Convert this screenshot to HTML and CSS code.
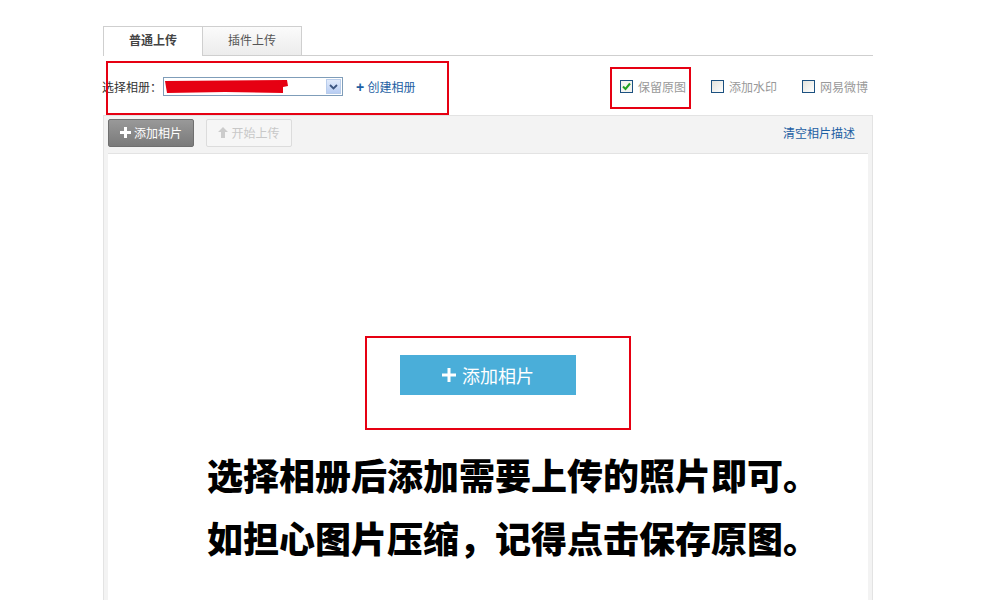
FILE: index.html
```html
<!DOCTYPE html>
<html>
<head>
    <title>上传相片</title>
    <link rel="stylesheet" href="styles.css">
</head>
<body>
    <div id="upload">
        <div class="tabs">
            <div class="tab active">普通上传</div>
            <div class="tab">插件上传</div>
        </div>

        <div class="options">
            <div class="album-row">
                <span class="album-label">选择相册：</span>
                <div class="album-select">
                    <svg class="scribble" width="124" height="14" viewBox="0 0 124 14">
                        <polygon points="0,1 122,0 123,6 118,7 118,13 60,12 2,13" fill="#e60012"/>
                    </svg>
                    <span class="select-arrow">
                        <svg width="9" height="6" viewBox="0 0 9 6"><path d="M1 1 L4.5 4.5 L8 1" fill="none" stroke="#3d5680" stroke-width="1.8"/></svg>
                    </span>
                </div>
                <a class="create-link"><b>+</b> 创建相册</a>
                <div class="mark mark-album"></div>
            </div>
            <div class="checks">
                <label class="check keep">
                    <span class="box checked">
                        <svg width="11" height="11" viewBox="0 0 11 11"><path d="M2 5.5 L4.5 8 L9 2.5" fill="none" stroke="#21a121" stroke-width="2"/></svg>
                    </span>保留原图
                    <div class="mark mark-keep"></div>
                </label>
                <label class="check"><span class="box"></span>添加水印</label>
                <label class="check"><span class="box"></span>网易微博</label>
            </div>
        </div>

        <div class="panel">
            <div class="toolbar">
                <button class="btn btn-add">
                    <svg width="11" height="11" viewBox="0 0 11 11"><path d="M4 0h3v4h4v3H7v4H4V7H0V4h4z" fill="#fff"/></svg>添加相片
                </button>
                <button class="btn btn-start">
                    <svg width="10" height="11" viewBox="0 0 10 11"><path d="M5 0 L10 5 H7 V11 H3 V5 H0 Z" fill="#ccc"/></svg>开始上传
                </button>
                <a class="clear-link">清空相片描述</a>
            </div>
            <div class="drop">
                <div class="big-add-wrap">
                    <button class="big-add">
                        <svg width="14" height="14" viewBox="0 0 14 14"><path d="M5.5 0h3v5.5H14v3H8.5V14h-3V8.5H0v-3h5.5z" fill="#fff"/></svg>添加相片
                    </button>
                    <div class="mark mark-big"></div>
                </div>
                <div class="tip">
                    <p>选择相册后添加需要上传的照片即可。</p>
                    <p>如担心图片压缩，记得点击保存原图。</p>
                </div>
            </div>
        </div>
    </div>
</body>
</html>
```

FILE: styles.css
```css
body {
    margin: 0;
    background: #fff;
    font-family: "Liberation Sans", "Noto Sans CJK SC", sans-serif;
    font-size: 12px;
    color: #333;
    overflow: hidden;
}
#upload {
    width: 770px;
    margin-left: 103px;
    padding-top: 26px;
}
.tabs {
    display: flex;
    height: 29px;
    border-bottom: 1px solid #cfcfcf;
}
.tab {
    width: 98px;
    height: 28px;
    line-height: 28px;
    text-align: center;
    border: 1px solid #cfcfcf;
    border-bottom: none;
    background: linear-gradient(#fbfbfb, #ececec);
    color: #555;
}
.tab + .tab { border-left: none; }
.tab.active {
    height: 29px;
    background: #fff;
    font-weight: bold;
    color: #444;
}
.options {
    height: 59px;
    display: flex;
    align-items: center;
    justify-content: space-between;
}
.album-row {
    position: relative;
    display: flex;
    align-items: center;
    margin-left: -1px;
    margin-top: 2px;
}
.album-label {
    color: #333;
    margin-right: 1px;
}
.album-select {
    position: relative;
    width: 178px;
    height: 17px;
    border: 1px solid #7f9db9;
    background: #fff;
}
.scribble {
    position: absolute;
    left: 1px;
    top: 2px;
}
.select-arrow {
    position: absolute;
    right: 1px;
    top: 1px;
    width: 15px;
    height: 15px;
    border: 1px solid #b9cdeb;
    box-sizing: border-box;
    background: linear-gradient(#e2ebfb, #b8cdf3);
    display: flex;
    align-items: center;
    justify-content: center;
}
.create-link {
    margin-left: 13px;
    color: #1d5fa3;
}
.create-link b { font-size: 14px; }
.mark {
    position: absolute;
    border: 2px solid #e60012;
    pointer-events: none;
}
.mark-album {
    left: 4px;
    top: -16px;
    width: 339px;
    height: 50px;
}
.checks {
    display: flex;
    align-items: center;
    margin-right: 5px;
    margin-top: 2px;
}
.check {
    position: relative;
    display: flex;
    align-items: center;
    color: #999;
    margin-left: 25px;
}
.box {
    width: 11px;
    height: 11px;
    border: 1px solid #1c5180;
    background: linear-gradient(135deg, #e4e3dc, #fff);
    margin-right: 5px;
    display: flex;
    align-items: center;
    justify-content: center;
}
.box.checked { background: #f4f4f0; }
.mark-keep {
    left: -10px;
    top: -11px;
    width: 77px;
    height: 38px;
}
.panel {
    border: 1px solid #e3e3e3;
    background: #f3f3f3;
    padding: 0 4px;
    height: 600px;
}
.toolbar {
    height: 38px;
    box-sizing: border-box;
    padding-bottom: 4px;
    display: flex;
    align-items: center;
    border-bottom: 1px solid #e3e3e3;
}
.btn {
    display: flex;
    align-items: center;
    justify-content: center;
    gap: 3px;
    height: 28px;
    padding: 0;
    font-family: inherit;
    font-size: 12px;
    border-radius: 2px;
}
.btn-add {
    width: 86px;
    color: #fff;
    border: 1px solid #6f6f6f;
    background: linear-gradient(#999, #7a7a7a);
}
.btn-start {
    width: 86px;
    margin-left: 12px;
    color: #c8c8c8;
    border: 1px solid #dcdcdc;
    background: #f6f6f6;
}
.clear-link {
    margin-left: auto;
    margin-right: 13px;
    color: #1d5fa3;
}
.drop {
    background: #fff;
    height: 560px;
    padding-top: 201px;
    box-sizing: border-box;
}
.big-add-wrap {
    position: relative;
    width: 176px;
    margin: 0 auto;
}
.big-add {
    width: 176px;
    height: 40px;
    border: none;
    background: #4aaed9;
    color: #fff;
    font-family: inherit;
    font-size: 18px;
    display: flex;
    align-items: center;
    justify-content: center;
    gap: 6px;
}
.mark-big {
    left: -35px;
    top: -19px;
    width: 262px;
    height: 90px;
}
.tip {
    margin-top: 48px;
    padding-left: 99px;
}
.tip p {
    margin: 0;
    font-family: "Noto Sans CJK SC", sans-serif;
    font-weight: 900;
    font-size: 36px;
    line-height: 63px;
    color: #000;
    white-space: nowrap;
}
```
